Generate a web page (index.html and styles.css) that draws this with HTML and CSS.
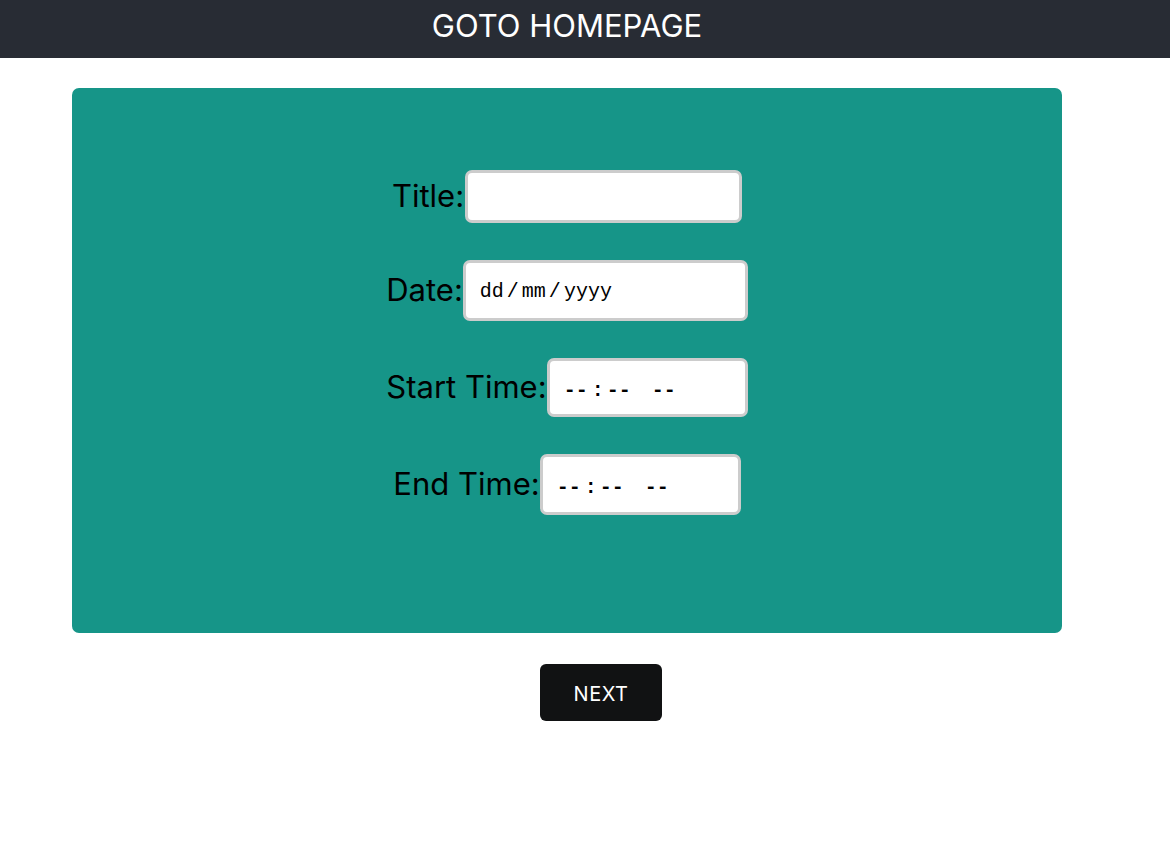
FILE: index.html
```html
<!DOCTYPE html>
<html>
<head>
<meta charset="utf-8">
<link rel="stylesheet" href="styles.css">
</head>
<body>
<header class="topbar"><span class="home-link">GOTO HOMEPAGE</span></header>
<main class="page">
  <section class="card">
    <div class="row">
      <label class="label">Title:</label>
      <div class="field field-title"></div>
    </div>
    <div class="row">
      <label class="label">Date:</label>
      <div class="field field-date"><span>dd</span><span class="sep">/</span><span>mm</span><span class="sep">/</span><span>yyyy</span></div>
    </div>
    <div class="row">
      <label class="label">Start Time:</label>
      <div class="field field-time"><span>--</span><span class="colon">:</span><span>--</span><span class="ampm">--</span></div>
    </div>
    <div class="row">
      <label class="label">End Time:</label>
      <div class="field field-time field-end"><span>--</span><span class="colon">:</span><span>--</span><span class="ampm">--</span></div>
    </div>
  </section>
  <div class="actions">
    <button class="next-btn">NEXT</button>
  </div>
</main>
</body>
</html>
```
FILE: styles.css
```css
* { box-sizing: border-box; }
html, body { margin: 0; padding: 0; background: #ffffff; }
body { font-family: Inter, "Noto Sans", sans-serif; color: #000; }

.topbar {
  height: 58px;
  background: #282c34;
  display: flex;
  align-items: center;
  justify-content: center;
  padding-right: 36px;
  padding-bottom: 8px;
}
.home-link {
  color: #ffffff;
  font-size: 31px;
  line-height: 1;
}

.page {
  padding: 30px 108px 0 72px;
}

.card {
  background: #169588;
  border-radius: 7px;
  height: 545px;
  padding-top: 82px;
  display: flex;
  flex-direction: column;
  gap: 37px;
}

.row {
  display: flex;
  justify-content: center;
  align-items: center;
}

.label {
  font-size: 31px;
  line-height: 1;
  margin-bottom: 3px;
}

.field {
  background: #ffffff;
  border: 3px solid #cccccc;
  border-radius: 7px;
  display: flex;
  align-items: center;
  font-family: "Liberation Mono", monospace;
  font-size: 20px;
  color: #000;
}
.field-title { width: 277px; height: 53px; margin-left: 1px; }
.field-date { width: 285px; height: 61px; padding-left: 14px; padding-top: 2px; }
.field-date .sep { margin: 0 3px; }
.field-time {
  width: 201px; height: 59px; padding-left: 14px; padding-top: 5px;
  font-weight: bold;
}
.field-time .colon { margin: 0 3px 0 4px; }
.field-time .ampm { margin-left: 21px; }
.field-end { height: 61px; }

.actions {
  display: flex;
  justify-content: center;
  padding-left: 68px;
  margin-top: 31px;
}
.next-btn {
  width: 122px;
  height: 57px;
  background: #111213;
  color: #ffffff;
  border: none;
  border-radius: 6px;
  font-family: Inter, "Noto Sans", sans-serif;
  font-size: 20px;
  letter-spacing: 0.5px;
  padding-top: 3px;
}
```
